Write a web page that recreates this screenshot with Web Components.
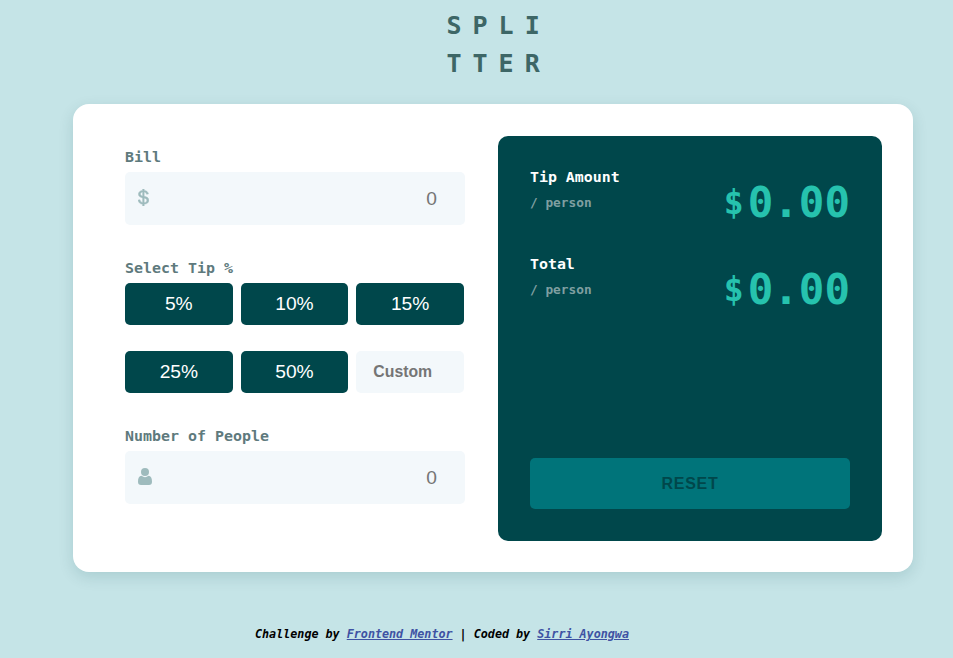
<!DOCTYPE html>
<html lang="en"><head><meta charset="utf-8"><title>Tip calculator</title>
<style>body{margin:0;background:#c5e4e7;overflow:hidden}</style></head><body>
<splitter-app></splitter-app>
<script>
const mono = '"DejaVu Sans Mono", monospace', sans = '"Liberation Sans", Arial, sans-serif';
const define = (name, render) => customElements.define(name, class extends HTMLElement {
  connectedCallback() {
    if (!this.shadowRoot) this.attachShadow({mode:'open'}).innerHTML = render(this);
  }
});
define('app-logo', () => `<style>
:host{display:block;width:104px;margin:7px 0 0 446.5px;font:700 25px/38px ${mono};letter-spacing:11px;color:#3d6666;white-space:nowrap}
</style><div>SPLI</div><div>TTER</div>`);
define('field-label', () => `<style>
:host{display:block;height:24px;font:700 14.95px/18px ${mono};color:#5e7a7d;white-space:nowrap}
</style><slot></slot>`);
define('number-field', () => `<style>
:host{display:flex;align-items:center;box-sizing:border-box;width:340px;height:53px;padding:0 28px 0 13px;border-radius:5px;background:#f3f8fb;color:#757575;font:19.2px ${sans}}
.value{margin-left:auto}
</style><slot name="icon"></slot><span class="value"><slot></slot></span>`);
define('tip-option', () => `<style>
:host{display:flex;align-items:center;justify-content:center;height:42px;border-radius:5px;background:#00474b;color:#fff;font:19.2px ${sans}}
:host([custom]){justify-content:flex-start;box-sizing:border-box;padding:0 0 0 17px;background:#f3f8fb;color:#757575;font:700 15.8px ${sans}}
</style><slot></slot>`);
define('tip-grid', () => `<style>
:host{display:grid;grid-template-columns:repeat(3,minmax(0,1fr));gap:26px 8px;width:339px}
</style><slot></slot>`);
define('result-row', el => `<style>
:host{display:flex;justify-content:space-between;height:86.5px;color:#fff;font:700 14.9px/25px ${mono}}
small{display:block;font-size:12.8px;color:#7f9fa1}
.amount{display:block;font-size:42.5px;line-height:50px;color:#26c2ae;padding-top:13px}
.amount::first-letter{font-size:33px;letter-spacing:4px;vertical-align:3px;line-height:1;-webkit-text-stroke:1px #26c2ae}
</style><div>${el.getAttribute('label')}<small>/ person</small></div><span class="amount">${el.getAttribute('amount')}</span>`);
define('result-panel', () => `<style>
:host{display:flex;flex-direction:column;box-sizing:border-box;width:384px;height:405px;padding:29px 32px 32px;border-radius:10px;background:#00474b}
button{margin-top:auto;height:51px;border:0;border-radius:5px;background:#00747a;color:#00474b;font:700 16px ${sans};letter-spacing:.7px}
</style><result-row label="Tip Amount" amount="$0.00"></result-row><result-row label="Total" amount="$0.00"></result-row><button>RESET</button>`);
define('calculator-card', () => `<style>
:host{display:flex;justify-content:space-between;box-sizing:border-box;width:840px;height:468px;margin:21px 0 0 73px;padding:32px 31px 31px 52px;border-radius:16px;background:#fff;box-shadow:0 5px 15px rgba(0,71,75,.14)}
.form{padding-top:12px}
tip-grid{margin-bottom:34px}
number-field.bill{margin-bottom:34px}
svg{display:block;margin-top:-2px}
</style><div class="form">
<field-label>Bill</field-label>
<number-field class="bill"><svg slot="icon" width="11" height="17" viewBox="0 0 11 17"><path fill="#9ebbbd" stroke="#9ebbbd" stroke-width=".4" d="M4.600 17v-1.700C1.900 15 .3 13.400 0 11.100l2-.4c.3 1.600 1.200 2.500 2.600 2.800V8.900C1.900 8.200.4 7.300.4 5.100c0-2.100 1.700-3.500 4.200-3.700V0h1.600v1.400c2.400.2 3.900 1.500 4.300 3.500l-2 .3C8.200 4 7.500 3.300 6.200 3.100v4.200c3 .7 4.700 1.600 4.700 4 0 2.200-1.900 3.800-4.700 4V17zm0-13.900c-1.300.2-2.100.9-2.100 1.900 0 1.100.7 1.600 2.100 2zm1.600 10.500c1.600-.2 2.600-1 2.600-2.200 0-1.300-.9-1.800-2.600-2.200z"/></svg>0</number-field>
<field-label>Select Tip %</field-label>
<tip-grid><tip-option>5%</tip-option><tip-option>10%</tip-option><tip-option>15%</tip-option><tip-option>25%</tip-option><tip-option>50%</tip-option><tip-option custom>Custom</tip-option></tip-grid>
<field-label>Number of People</field-label>
<number-field><svg slot="icon" width="14" height="17" viewBox="0 0 14 17"><g fill="#9ebbbd"><circle cx="7" cy="4" r="4"/><path d="M3.500 7.800Q7 10.500 10.500 7.800C13 8 14 10.300 14 13.700 14 15.800 12.900 17 11 17H3C1.100 17 0 15.800 0 13.700 0 10.300 1 8 3.500 7.800z"/></g></svg>0</number-field>
</div><result-panel></result-panel>`);
define('page-credit', () => `<style>
:host{display:block;margin:52px 0 0 255px;font:italic 700 11.73px/20px ${mono};color:#000;white-space:nowrap}
a{color:#3e52a3;text-decoration:underline}
</style>Challenge by <a href="#">Frontend Mentor</a> | Coded by <a href="#">Sirri Ayongwa</a>`);
define('splitter-app', () => `<style>:host{display:flow-root}</style><app-logo></app-logo><calculator-card></calculator-card><page-credit></page-credit>`);
</script></body></html>
